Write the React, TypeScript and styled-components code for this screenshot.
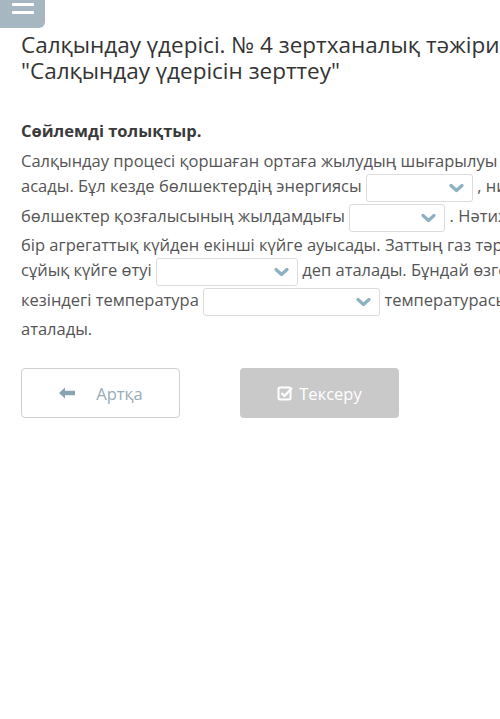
import React from "react";
import styled, { createGlobalStyle } from "styled-components";

const GlobalStyle = createGlobalStyle`
  html, body {
    margin: 0;
    padding: 0;
    background: #ffffff;
    overflow: hidden;
  }
  body {
    font-family: "Open Sans", "Liberation Sans", sans-serif;
  }
`;

const Chevron = () => (
  <svg width="15" height="10" viewBox="0 0 15 10">
    <path d="M2 2.5 L7.5 7.5 L13 2.5" fill="none" stroke="#8db0c2" strokeWidth="3.2" strokeLinecap="round" strokeLinejoin="round" />
  </svg>
);

const Dropdown = ({ width }: { width: number }) => (
  <Select $width={width}>
    <Chevron />
  </Select>
);

const App = () => {
  return (
    <Page>
      <GlobalStyle />
      <MenuButton>
        <MenuLine />
        <MenuLine />
      </MenuButton>
      <Title>
        Салқындау үдерісі. № 4 зертханалық тәжірибе
        <br />
        "Салқындау үдерісін зерттеу"
      </Title>
      <Question>Сөйлемді толықтыр.</Question>
      <Sentence>
        Салқындау процесі қоршаған ортаға жылудың шығарылуы нәтижесінде жүзеге
        <br />
        асады. Бұл кезде бөлшектердің энергиясы <Dropdown width={107} /> , ниже
        <br />
        бөлшектер қозғалысының жылдамдығы <Dropdown width={96} /> . Нәтижесінде зат
        <br />
        бір агрегаттық күйден екінші күйге ауысады. Заттың газ тәрізді күйден
        <br />
        сұйық күйге өтуі <Dropdown width={142} /> деп аталады. Бұндай өзгеріс
        <br />
        кезіндегі температура <Dropdown width={177} /> температурасы деп
        <br />
        аталады.
      </Sentence>
      <Actions>
        <BackButton>
          <svg width="18" height="14" viewBox="0 0 18 14">
            <path d="M1 7 L7 1.5 L7 4.8 L17 4.8 L17 9.2 L7 9.2 L7 12.5 Z" fill="#8aa3b3" />
          </svg>
          <span>Артқа</span>
        </BackButton>
        <CheckButton>
          <svg width="16" height="16" viewBox="0 0 16 16">
            <rect x="1.5" y="2.5" width="12" height="12" rx="1.5" fill="none" stroke="#ffffff" strokeWidth="2" />
            <path d="M4.5 8 L7.5 11 L15 3" fill="none" stroke="#ffffff" strokeWidth="2.2" />
          </svg>
          <span>Тексеру</span>
        </CheckButton>
      </Actions>
    </Page>
  );
};

export default App;

const Page = styled.div`
  width: 500px;
  height: 719px;
  overflow: hidden;
  position: relative;
`;

const MenuButton = styled.div`
  width: 45px;
  height: 28px;
  background: #a6b7c2;
  border-bottom-right-radius: 6px;
  display: flex;
  flex-direction: column;
  align-items: center;
  gap: 5px;
  padding-top: 3px;
  box-sizing: border-box;
`;

const MenuLine = styled.div`
  width: 22px;
  height: 3px;
  background: #ffffff;
  border-radius: 1px;
`;

const Title = styled.h1`
  margin: 4px 0 0 21px;
  font-size: 22.5px;
  font-weight: 400;
  line-height: 26px;
  color: #333333;
  white-space: nowrap;
`;

const Question = styled.h2`
  margin: 36px 0 0 21px;
  font-size: 16.5px;
  font-weight: 700;
  line-height: 22px;
  color: #3a3a3a;
`;

const Sentence = styled.p`
  margin: 7px 0 0 21px;
  font-size: 16.5px;
  line-height: 24px;
  color: #555555;
  white-space: nowrap;
`;

const Select = styled.span<{ $width: number }>`
  display: inline-flex;
  align-items: center;
  justify-content: flex-end;
  width: ${(p) => p.$width}px;
  height: 28px;
  box-sizing: border-box;
  border: 1px solid #dcdcdc;
  border-radius: 3px;
  background: #ffffff;
  padding-right: 8px;
  vertical-align: middle;
  margin: 1px 0;
`;

const Actions = styled.div`
  display: flex;
  gap: 60px;
  margin: 27px 0 0 21px;
`;

const BaseButton = styled.div`
  width: 159px;
  height: 50px;
  box-sizing: border-box;
  border-radius: 4px;
  display: flex;
  align-items: center;
  justify-content: center;
  font-size: 16.5px;
`;

const BackButton = styled(BaseButton)`
  border: 1px solid #cfcfcf;
  color: #97abb8;
  gap: 20px;
`;

const CheckButton = styled(BaseButton)`
  background: #c9c9c9;
  color: #ffffff;
  gap: 6px;
`;
